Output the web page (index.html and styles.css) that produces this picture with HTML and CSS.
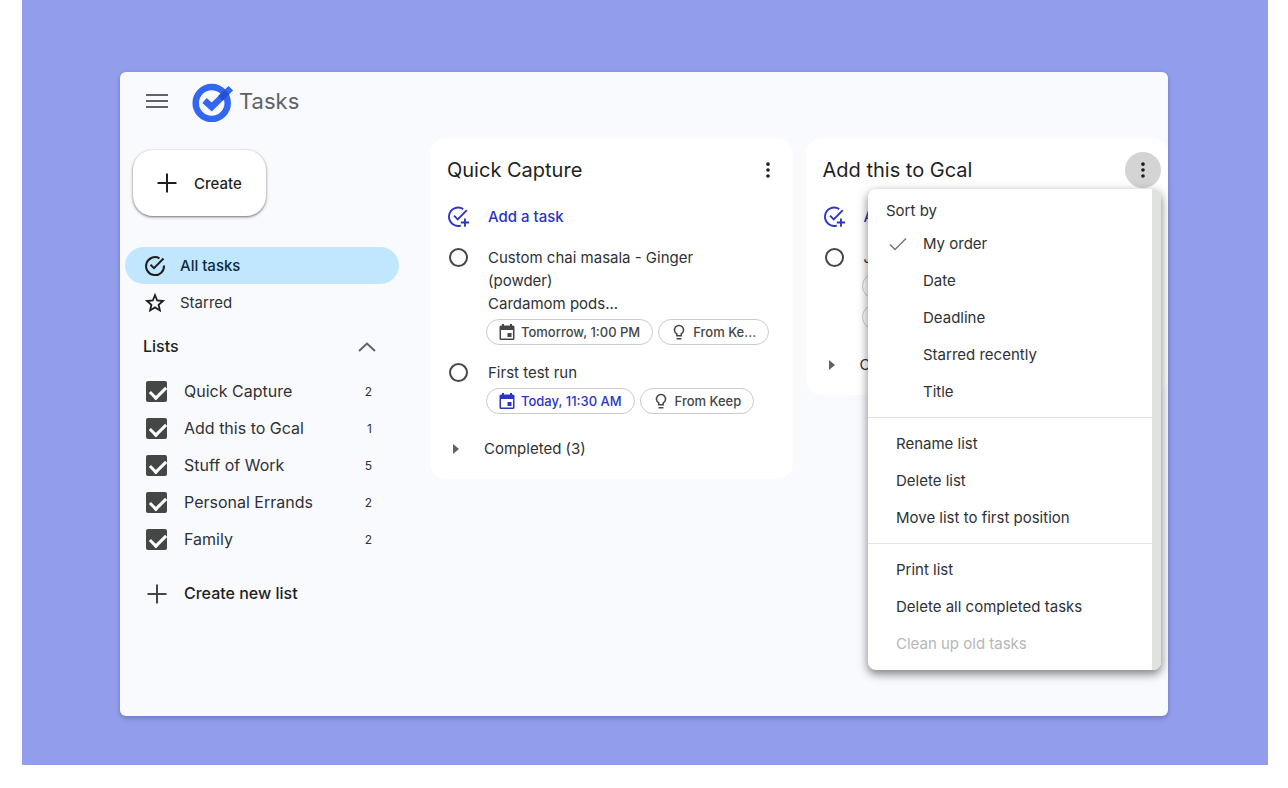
FILE: index.html
```
<!DOCTYPE html>
<html lang="en">
<head>
    <meta charset="UTF-8">
    <meta name="viewport" content="width=device-width, initial-scale=1.0">
    <title>Tasks</title>
    <link rel="stylesheet" href="styles.css">
</head>

<body>
    <!-- shared icons -->
    <svg class="icon-defs" aria-hidden="true">
        <symbol id="icon-add-task" viewBox="0 0 24 24">
            <path fill="none" stroke="currentColor" stroke-width="2" d="M20.5 4.5 10.6 14.6 6.6 10.6M16.6 3.4A10 10 0 1 0 14 21.3M18.5 13.5v9M14 18h9"/>
        </symbol>
        <symbol id="icon-more" viewBox="0 0 24 24">
            <circle cx="12" cy="5.5" r="2"/><circle cx="12" cy="12" r="2"/><circle cx="12" cy="18.5" r="2"/>
        </symbol>
        <symbol id="icon-plus" viewBox="0 0 20 20">
            <path fill="none" stroke="currentColor" stroke-width="2" d="M10 0.5v19M0.5 10h19"/>
        </symbol>
        <symbol id="icon-event" viewBox="0 0 16 16">
            <path fill-rule="evenodd" d="M3 0h2v1.5h6V0h2v1.5h1A1.500 1.500 0 0 1 15.500 3v11.500A1.500 1.500 0 0 1 14 16H2A1.500 1.500 0 0 1 .5 14.500V3A1.500 1.500 0 0 1 2 1.500h1zM2 6v8.500h12V6zM8.500 9h4v4h-4z"/>
        </symbol>
        <symbol id="icon-bulb" viewBox="0 0 16 16">
            <path fill="none" stroke="currentColor" stroke-width="1.5" d="M5.800 11.800V9.900A4.500 4.500 0 1 1 10.200 9.900v1.900zM5.600 14.800h4.800"/>
        </symbol>
    </svg>

    <div class="stage">
        <div class="window">
            <header class="header">
                <button class="icon-btn" aria-label="Main menu">
                    <svg class="icon-menu" viewBox="0 0 22 14"><path fill="none" stroke="currentColor" stroke-width="2" d="M0 1h22M0 7h22M0 13h22"/></svg>
                </button>
                <a class="brand" href="#">
                    <svg class="logo" viewBox="0 0 42 42" aria-hidden="true">
                        <circle cx="19.700" cy="23" r="16" fill="none" stroke="#3367f0" stroke-width="6.500"/>
                        <path fill="none" stroke="#3367f0" stroke-width="6.500" d="M12.500 20.500 19.700 27 38.800 8.300"/>
                        <path fill="none" stroke="#2450cf" stroke-width="6.500" d="M28.500 18.400 35 12"/>
                    </svg>
                    <span>Tasks</span>
                </a>
            </header>

            <div class="content">
                <nav class="sidebar">
                    <button class="create-btn">
                        <svg class="icon-plus"><use href="#icon-plus"/></svg>
                        Create
                    </button>

                    <a class="nav-item active" href="#">
                        <svg class="nav-icon" viewBox="0 0 22 22"><path fill="none" stroke="currentColor" stroke-width="2" d="M19.500 3.500 10 13.200 6.500 9.700M15.500 3.300A9 9 0 1 0 20 10.500"/></svg>
                        All tasks
                    </a>
                    <a class="nav-item" href="#">
                        <svg class="nav-icon" viewBox="0 0 22 22"><path fill="none" stroke="currentColor" stroke-width="1.800" d="M11 3.200 13.200 8.500 19 9 14.600 12.800 15.900 18.400 11 15.400 6.100 18.400 7.400 12.800 3 9 8.800 8.500z"/></svg>
                        Starred
                    </a>

                    <div class="lists-title">
                        <h2>Lists</h2>
                        <button class="icon-btn" aria-label="Collapse lists">
                            <svg class="icon-chevron" viewBox="0 0 18 10"><path fill="none" stroke="currentColor" stroke-width="2" d="M1 9 9 1.500 17 9"/></svg>
                        </button>
                    </div>

                    <ul class="lists">
                        <li><input type="checkbox" id="list1" checked><label for="list1">Quick Capture</label><span class="count">2</span></li>
                        <li><input type="checkbox" id="list2" checked><label for="list2">Add this to Gcal</label><span class="count">1</span></li>
                        <li><input type="checkbox" id="list3" checked><label for="list3">Stuff of Work</label><span class="count">5</span></li>
                        <li><input type="checkbox" id="list4" checked><label for="list4">Personal Errands</label><span class="count">2</span></li>
                        <li><input type="checkbox" id="list5" checked><label for="list5">Family</label><span class="count">2</span></li>
                    </ul>

                    <button class="new-list">
                        <svg class="icon-plus"><use href="#icon-plus"/></svg>
                        Create new list
                    </button>
                </nav>

                <main class="board">
                    <section class="card">
                        <div class="card-header">
                            <h2>Quick Capture</h2>
                            <button class="more-btn" aria-label="List options"><svg><use href="#icon-more"/></svg></button>
                        </div>
                        <button class="add-task">
                            <svg><use href="#icon-add-task"/></svg>
                            Add a task
                        </button>
                        <div class="task">
                            <button class="task-check" aria-label="Mark complete"></button>
                            <div class="task-body">
                                <p>Custom chai masala - Ginger (powder)<br>Cardamom pods...</p>
                                <div class="chips">
                                    <button class="chip"><svg><use href="#icon-event"/></svg>Tomorrow, 1:00 PM</button>
                                    <a class="chip" href="#"><svg><use href="#icon-bulb"/></svg>From Ke...</a>
                                </div>
                            </div>
                        </div>
                        <div class="task">
                            <button class="task-check" aria-label="Mark complete"></button>
                            <div class="task-body">
                                <p>First test run</p>
                                <div class="chips">
                                    <button class="chip today"><svg><use href="#icon-event"/></svg>Today, 11:30 AM</button>
                                    <a class="chip" href="#"><svg><use href="#icon-bulb"/></svg>From Keep</a>
                                </div>
                            </div>
                        </div>
                        <button class="completed"><span class="arrow"></span>Completed (3)</button>
                    </section>

                    <section class="card">
                        <div class="card-header">
                            <h2>Add this to Gcal</h2>
                            <button class="more-btn open" aria-label="List options" aria-expanded="true"><svg><use href="#icon-more"/></svg></button>

                            <!-- list options menu -->
                            <div class="menu">
                                <div class="menu-list" role="menu">
                                    <div class="menu-label">Sort by</div>
                                    <button class="menu-item sort" role="menuitem">
                                        <svg class="icon-tick" viewBox="0 0 18 14"><path fill="none" stroke="currentColor" stroke-width="1.500" d="M1 7.500 6 12.500 17 1.500"/></svg>
                                        My order
                                    </button>
                                    <button class="menu-item sort" role="menuitem">Date</button>
                                    <button class="menu-item sort" role="menuitem">Deadline</button>
                                    <button class="menu-item sort" role="menuitem">Starred recently</button>
                                    <button class="menu-item sort" role="menuitem">Title</button>
                                    <hr>
                                    <button class="menu-item" role="menuitem">Rename list</button>
                                    <button class="menu-item" role="menuitem">Delete list</button>
                                    <button class="menu-item" role="menuitem">Move list to first position</button>
                                    <hr>
                                    <button class="menu-item" role="menuitem">Print list</button>
                                    <button class="menu-item" role="menuitem">Delete all completed tasks</button>
                                    <button class="menu-item" role="menuitem" disabled>Clean up old tasks</button>
                                </div>
                                <div class="menu-scroll"></div>
                            </div>
                        </div>
                        <button class="add-task">
                            <svg><use href="#icon-add-task"/></svg>
                            Add a task
                        </button>
                        <div class="task">
                            <button class="task-check" aria-label="Mark complete"></button>
                            <div class="task-body">
                                <p>J</p>
                                <div class="chips stacked">
                                    <span class="chip"></span>
                                    <span class="chip"></span>
                                </div>
                            </div>
                        </div>
                        <button class="completed"><span class="arrow"></span>Completed</button>
                    </section>
                </main>
            </div>
        </div>
    </div>
</body>

</html>
```
FILE: styles.css
```
* {
    margin: 0;
    padding: 0;
    box-sizing: border-box;
}
body {
    background: #fff;
    color: #303134;
    font: 15px/23px Inter, "Liberation Sans", sans-serif;
}
button {
    border: 0;
    background: none;
    color: inherit;
    font: inherit;
    text-align: left;
    cursor: pointer;
}
a {
    color: inherit;
    text-decoration: none;
}
h2 {
    font-weight: 400;
}
svg {
    flex: none;
    fill: currentColor;
}
.icon-defs {
    display: none;
}

.stage {
    display: flex;
    min-height: calc(100vh - 23px);
    margin: 0 20px 23px 22px;
    padding: 72px 100px 49px 98px;
    background: #929eeb;
}
.window {
    flex: 1;
    border-radius: 6px;
    background: #f8fafe;
    box-shadow: 0 2px 5px rgba(60, 60, 120, .4);
}

/* header */
.header {
    display: flex;
    align-items: center;
    gap: 24px;
    height: 66px;
    padding: 0 26px 8px;
    color: #5f6368;
}
.icon-btn {
    display: flex;
}
.icon-menu {
    width: 22px;
    height: 14px;
}
.brand {
    display: flex;
    align-items: center;
    gap: 5px;
    font-size: 22px;
    line-height: 30px;
}
.logo {
    width: 42px;
    height: 42px;
}

.content {
    display: grid;
    grid-template-columns: 310px 1fr;
    align-items: start;
}

/* sidebar */
.sidebar {
    padding: 12px 31px 0 5px;
}
.create-btn {
    display: flex;
    align-items: center;
    gap: 17px;
    height: 66px;
    margin: 0 0 31px 8px;
    padding: 0 24px;
    border-radius: 20px;
    background: #fff;
    box-shadow: 0 1px 3px 1px rgba(0, 0, 0, .15), 0 1px 2px rgba(0, 0, 0, .4);
    color: #1f1f1f;
    font-weight: 500;
}
.icon-plus {
    width: 20px;
    height: 20px;
}
.nav-item {
    display: flex;
    align-items: center;
    gap: 14px;
    height: 37px;
    padding-left: 19px;
    border-radius: 19px;
}
.nav-item.active {
    background: #c0e7fe;
    color: #0b2a42;
    font-weight: 500;
}
.nav-icon {
    width: 22px;
    height: 22px;
    color: #1f1f1f;
}
.lists-title {
    display: flex;
    align-items: center;
    justify-content: space-between;
    height: 37px;
    margin: 7px 0 8px;
    padding: 0 23px 0 18px;
    color: #1f1f1f;
}
.lists-title h2 {
    font-size: 16px;
    font-weight: 500;
}
.icon-chevron {
    width: 18px;
    height: 10px;
    color: #5f6368;
}
.lists {
    list-style: none;
}
.lists li {
    display: flex;
    align-items: center;
    height: 37px;
    padding: 0 27px 0 21px;
}
.lists input {
    appearance: none;
    position: relative;
    width: 21px;
    height: 21px;
    border-radius: 2px;
    background: #444746;
}
.lists input:checked::after {
    content: "";
    position: absolute;
    left: 7px;
    top: 2px;
    width: 7px;
    height: 13px;
    border: solid #fff;
    border-width: 0 3px 3px 0;
    transform: rotate(45deg);
}
.lists label {
    flex: 1;
    padding-left: 17px;
    font-size: 16px;
}
.count {
    font-size: 12px;
}
.new-list {
    display: flex;
    align-items: center;
    gap: 17px;
    height: 37px;
    margin: 17px 0 0 22px;
    font-size: 16px;
    font-weight: 500;
    color: #1f1f1f;
}
.new-list svg {
    color: #444746;
}

/* board */
.board {
    display: grid;
    grid-template-columns: 1fr 1fr;
    gap: 13px;
    align-items: start;
}
.card {
    padding: 14px 17px 12px;
    border-radius: 16px;
    background: #fff;
}
.card-header {
    position: relative;
    display: flex;
    align-items: center;
    justify-content: space-between;
    height: 36px;
    margin-right: -10px;
    margin-bottom: 10px;
    color: #1f1f1f;
}
.card-header h2 {
    font-size: 20px;
    line-height: 28px;
}
.more-btn {
    display: flex;
    align-items: center;
    justify-content: center;
    width: 36px;
    height: 36px;
    border-radius: 50%;
}
.more-btn svg {
    width: 22px;
    height: 22px;
}
.more-btn.open {
    background: #d4d4d5;
}
.add-task {
    display: flex;
    align-items: center;
    gap: 18px;
    height: 37px;
    padding-left: 1px;
    color: #2c35c4;
    font-weight: 500;
}
.add-task svg {
    width: 22px;
    height: 22px;
}
.task {
    display: flex;
    gap: 18px;
    padding: 11px 0 5px 2px;
}
.task-check {
    flex: none;
    width: 19px;
    height: 19px;
    margin-top: 2px;
    border: 2px solid #444746;
    border-radius: 50%;
}
.task-body {
    flex: 1;
    padding-left: 2px;
}
.task-body p {
    padding-right: 48px;
}
.chips {
    display: flex;
    gap: 5px;
    margin: 4px 0 0 -2px;
}
.chip {
    display: flex;
    align-items: center;
    gap: 6px;
    height: 26px;
    padding: 0 12px;
    border: 1px solid #c9cbcc;
    border-radius: 13px;
    color: #444746;
    font-size: 13px;
    font-weight: 500;
    line-height: 18px;
    white-space: nowrap;
}
.chip svg {
    width: 16px;
    height: 16px;
}
.chip.today {
    color: #2c35c4;
}
.chips.stacked {
    flex-direction: column;
}
.completed {
    display: flex;
    align-items: center;
    gap: 25px;
    height: 37px;
    margin-top: 11px;
    padding-left: 6px;
}
.arrow {
    border: solid transparent;
    border-width: 5px 0 5px 6px;
    border-left-color: #5f6368;
}

/* menu */
.menu {
    position: absolute;
    right: 0;
    top: 37px;
    display: flex;
    width: 293px;
    border-radius: 8px;
    background: #fff;
    box-shadow: 0 4px 8px rgba(0, 0, 0, .4), 0 3px 14px rgba(0, 0, 0, .15);
    color: #303134;
    overflow: hidden;
}
.menu-list {
    flex: 1;
    padding: 8px 0;
}
.menu-scroll {
    width: 9px;
    background: #dfe2df;
}
.menu-label {
    padding-left: 18px;
    line-height: 28px;
}
.menu-item {
    display: flex;
    align-items: center;
    width: 100%;
    height: 37px;
    padding-left: 28px;
}
.menu-item.sort {
    position: relative;
    padding-left: 55px;
}
.icon-tick {
    position: absolute;
    left: 21px;
    width: 18px;
    height: 14px;
    color: #777;
}
.menu-item:disabled {
    color: #b5b7b9;
}
.menu hr {
    margin: 7px 0;
    border: 0;
    border-top: 1px solid #e3e4e5;
}
```
